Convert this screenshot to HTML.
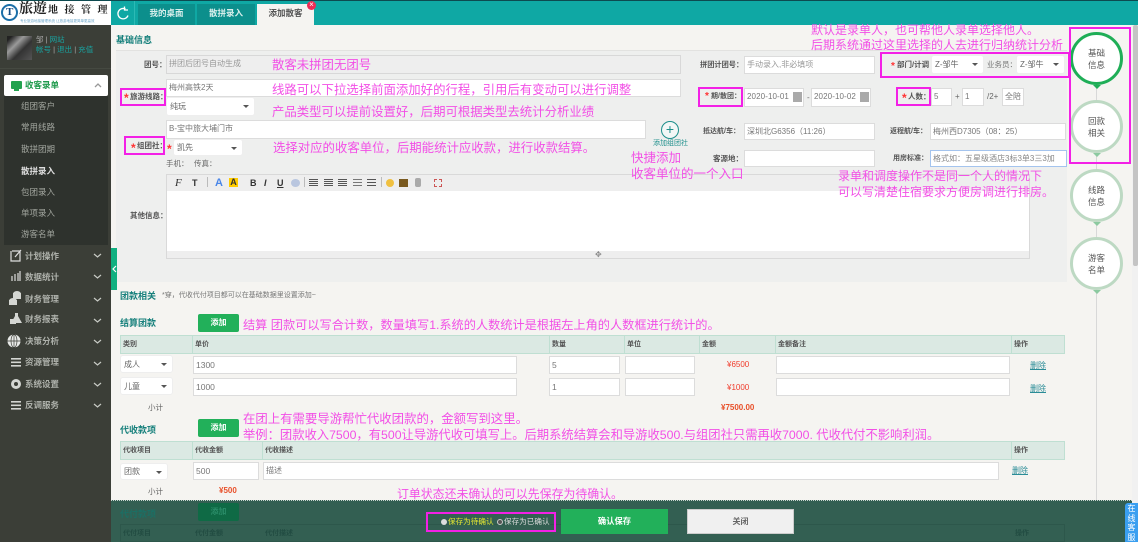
<!DOCTYPE html>
<html lang="zh"><head><meta charset="utf-8"><title>添加散客</title>
<style>
html,body{margin:0;padding:0;width:1138px;height:542px;overflow:hidden;background:#f5f4f1}
#p{position:relative;width:1138px;height:542px;overflow:hidden;font:8px "Liberation Sans","Noto Sans CJK SC",sans-serif;color:#666;filter:blur(.35px)}
#p div,#p span.a{position:absolute;white-space:nowrap;box-sizing:border-box}
.t{line-height:12px}
.l{line-height:12px;font-size:7.5px;color:#555;font-weight:bold}
.n{color:#f24fe6;font-size:12.4px;line-height:16px}
.h{color:#17807c;font-weight:bold;font-size:9px;line-height:14px}
.i{background:#fff;border:1px solid #dcdcdc;line-height:16px;padding-left:2px;color:#777;font-size:8px}
.s{background:#fff;border-radius:3px;border:1px solid #eee;line-height:17px;padding-left:3px;color:#666;font-size:8px}
.s:after{content:"";position:absolute;right:5px;top:7px;border:3px solid transparent;border-top:3px solid #555;border-bottom:0}
.m{border:2px solid #f320e6}
.r{color:#f33;font-size:12px;font-weight:bold}
.th{background:#dbe9e3;border:1px solid #bfdfd2;border-left:0;line-height:17px;padding-left:2px;color:#555;font-size:7px;font-weight:bold}
.mi{color:#aeb1ab;font-size:8.5px;line-height:12px;left:25px;font-weight:bold}
.sm{color:#a0a49d;font-size:8.5px;line-height:12px;left:21px}
.c{background:#fff;border-radius:50%;width:53px;height:53px;left:1070px;border:3px solid #bdd9c3;text-align:center;font-size:8.5px;color:#555;line-height:11.5px;padding-top:13px;white-space:normal!important}
.tri{left:1093px;border:4px solid transparent;border-top:4px solid #8cc9a0;border-bottom:0;width:0;height:0}
.btn{background:#22b05a;color:#fff;text-align:center;border-radius:2px;left:198px;width:41px;height:18px;line-height:18px;font-weight:bold;font-size:8px}
.tab{top:4px;height:21px;background:#0c8f8c;color:#d8efec;text-align:center;line-height:19px;font-weight:bold;font-size:8.5px}
.dl{color:#2a8c97;text-decoration:underline;line-height:12px}
</style></head><body><div id="p">

<!-- top bar -->
<div style="left:111px;top:0;width:1027px;height:25px;background:#0fa8a4;border-top:1px solid #0d4a50"></div>
<div style="left:134px;top:1px;width:1px;height:24px;background:#2dbab5"></div>
<div style="left:0;top:0;width:111px;height:25px;background:#fff;overflow:hidden;border-top:1px solid #0d4a50">
 <div style="left:1px;top:3px;width:17px;height:17px;border-radius:50%;border:2.500px solid #1b6fa8;background:#fff"></div>
 <div style="left:6px;top:5px;color:#174e84;font:bold 11px 'Liberation Serif',serif;line-height:12px">T</div>
 <div style="left:19px;top:-1px;color:#222;font:bold 14px 'Liberation Serif','Noto Serif CJK SC',serif;line-height:20px">旅遊</div>
 <div style="left:48px;top:1px;color:#222;font:bold 10px 'Liberation Serif','Noto Serif CJK SC',serif;line-height:18px;letter-spacing:6.500px">地接管理平台</div>
 <div style="left:20px;top:18px;color:#6aa5c9;font-size:3.500px;line-height:5px">专业旅游地接管理系统 让旅游地接更简单更高效</div>
</div>
<div style="left:116px;top:6px;width:14px;height:14px"><svg width="14" height="14" viewBox="0 0 14 14"><path d="M12 9.500A5.200 5.200 0 1 1 9.500 3M8.500 .5v3.500h3.500" fill="none" stroke="#fff" stroke-width="1.300"/></svg></div>
<div class="tab" style="left:138px;width:57px">我的桌面</div>
<div class="tab" style="left:197px;width:58px">散拼录入</div>
<div class="tab" style="left:257px;width:57px;height:22px;background:#f5f4f1;color:#555">添加散客</div>
<div style="left:307px;top:1px;width:9px;height:9px;border-radius:50%;background:#ee2b55;color:#fff;font-size:8px;line-height:8px;text-align:center">×</div>

<!-- sidebar -->
<div style="left:0;top:25px;width:111px;height:517px;background:#3b3e37"></div>
<div style="left:7px;top:36px;width:25px;height:24px;background:linear-gradient(135deg,#222 10%,#9a9a9a 35%,#333 60%,#555 100%)"></div>
<div class="t" style="left:36px;top:34px;color:#aaa;font-size:7.500px">邹 | <span style="color:#19a3a0">网站</span></div>
<div class="t" style="left:36px;top:44px;color:#19a3a0;font-size:7.500px">帐号 <span style="color:#aaa">|</span> 退出 <span style="color:#aaa">|</span> 充值</div>
<div style="left:0;top:68px;width:111px;height:1px;background:#454941"></div>
<div style="left:4px;top:75px;width:104px;height:21px;background:#fff;border-radius:2px"></div>
<div style="left:11px;top:81px;width:11px;height:8px;background:#22a24e;border-radius:1px"></div>
<div style="left:14px;top:89px;width:5px;height:2px;background:#22a24e"></div>
<div style="left:25px;top:79px;color:#1e9a4c;font-weight:bold;font-size:8.500px;line-height:12px">收客录单</div>
<div style="left:94px;top:83px"><svg width="8" height="5" style="display:block"><path d="M1 4l3-3 3 3" fill="none" stroke="#999" stroke-width="1.300"/></svg></div>
<div style="left:4px;top:96px;width:104px;height:149px;background:#2e322d"></div>
<div class="sm" style="top:100px">组团客户</div>
<div class="sm" style="top:121px">常用线路</div>
<div class="sm" style="top:143px">散拼团期</div>
<div class="sm" style="top:165px;color:#ddd;font-weight:bold">散拼录入</div>
<div class="sm" style="top:186px">包团录入</div>
<div class="sm" style="top:207px">单项录入</div>
<div class="sm" style="top:228px">游客名单</div>

<div class="mi" style="top:250px">计划操作</div>
<div class="mi" style="top:271px">数据统计</div>
<div class="mi" style="top:293px">财务管理</div>
<div class="mi" style="top:313px">财务报表</div>
<div class="mi" style="top:335px">决策分析</div>
<div class="mi" style="top:356px">资源管理</div>
<div class="mi" style="top:378px">系统设置</div>
<div class="mi" style="top:399px">反调服务</div>
<div style="left:0;top:245px;width:111px;height:180px"><svg width="111" height="180" style="display:block">
 <g fill="none" stroke="#c8cbc5" stroke-width="1.200">
 <path d="M94 9l3.500 3 3.500-3M94 30l3.500 3 3.500-3M94 53l3.500 3 3.500-3M94 74l3.500 3 3.500-3M94 95l3.500 3 3.500-3M94 117l3.500 3 3.500-3M94 138l3.500 3 3.500-3M94 159l3.500 3 3.500-3"/>
 <path d="M12 6h8v10h-9v-10M15 12l6-7" stroke="#ddd"/>
 <path d="M12 36v-5M15 36v-7M18 36v-8M20 36v-10" stroke="#ddd"/>
 </g>
 <g fill="#d4d6d2">
 <ellipse cx="17" cy="49" rx="4" ry="3"/><ellipse cx="13" cy="56" rx="4" ry="3"/><rect x="9" y="55" width="8" height="5"/><rect x="13" y="48" width="8" height="6"/>
 <path d="M15 68h3v3l4 7H11l4-7z"/><rect x="10" y="74" width="6" height="5"/>
 <circle cx="14" cy="96" r="6.500" fill="#e8e9e7"/>
 <rect x="11" y="113" width="10" height="1.600"/><rect x="11" y="116.500" width="10" height="1.600"/><rect x="11" y="120" width="10" height="1.600"/>
 <rect x="11" y="156" width="10" height="1.600"/><rect x="11" y="159.500" width="10" height="1.600"/><rect x="11" y="163" width="10" height="1.600"/>
 <circle cx="16" cy="139" r="5"/>
 </g>
 <g stroke="#3b3e37" stroke-width=".7" fill="none"><path d="M7.500 96h13M14 89.500v13"/><ellipse cx="14" cy="96" rx="3" ry="6.500"/></g>
 <circle cx="16" cy="139" r="2" fill="#3b3e37"/>
</svg></div>

<!-- form panel -->
<div style="left:111px;top:25px;width:1021px;height:475px;background:#f5f4f1"></div>
<div class="h" style="left:116px;top:33px">基础信息</div>
<div style="left:116px;top:50px;width:951px;height:232px;background:#eeefee;border-top:1px solid #e2e2e0"></div>
<div style="left:111px;top:248px;width:6px;height:42px;background:#10b080"></div>
<div style="left:112px;top:265px"><svg width="5" height="8" style="display:block"><path d="M4 1L1 4l3 3" fill="none" stroke="#fff" stroke-width="1.200"/></svg></div>

<div class="l" style="left:144px;top:59px">团号：</div>
<div class="i" style="left:166px;top:55px;width:515px;height:19px;background:#eee;color:#999;border:1px solid #d8d8d8">拼团后团号自动生成</div>
<div class="i" style="left:166px;top:79px;width:515px;height:18px">梅州高铁2天</div>
<div class="s" style="left:166px;top:97px;width:89px;height:19px">纯玩</div>
<div class="m" style="left:120px;top:88px;width:46px;height:18px"></div>
<div class="l" style="left:130px;top:91px">旅游线路：</div>
<div class="r" style="left:124px;top:92px;line-height:12px">*</div>
<div class="i" style="left:166px;top:120px;width:480px;height:19px">B-宝中旅大埔门市</div>
<div class="s" style="left:173px;top:139px;width:70px;height:17px;line-height:15px">凯先</div>
<div class="r" style="left:167px;top:143px;line-height:12px">*</div>
<div class="m" style="left:124px;top:136px;width:41px;height:19px"></div>
<div class="l" style="left:137px;top:140px">组团社：</div>
<div class="r" style="left:131px;top:142px;line-height:12px">*</div>
<div class="t" style="left:166px;top:158px;font-size:7.500px">手机：</div>
<div class="t" style="left:194px;top:158px;font-size:7.500px">传真：</div>

<!-- editor -->
<div style="left:166px;top:174px;width:864px;height:85px;background:#eee;border:1px solid #d9d9d9"></div>
<div style="left:167px;top:191px;width:862px;height:60px;background:#fff"></div>
<div class="l" style="left:130px;top:210px">其他信息：</div>
<div style="left:172px;top:177px;width:270px;height:12px;font-size:9px;line-height:12px;color:#333">
 <span class="a" style="left:3px;font-style:italic;font-family:'Liberation Serif',serif;font-size:11px">F</span>
 <span class="a" style="left:20px;font-weight:bold">T</span>
 <span class="a" style="left:35px;width:1px;height:10px;background:#bbb"></span>
 <span class="a" style="left:43px;color:#4a86e8;font-size:11px;font-weight:bold">A</span>
 <span class="a" style="left:57px;width:9px;height:9px;background:#fc0;text-align:center;font-weight:bold;line-height:9px;top:1px">A</span>
 <span class="a" style="left:78px;font-weight:bold">B</span>
 <span class="a" style="left:92px;font-weight:bold;font-style:italic">I</span>
 <span class="a" style="left:105px;font-weight:bold;text-decoration:underline">U</span>
 <span class="a" style="left:119px;width:9px;height:8px;top:2px;border-radius:50%;background:#b9c6df"></span>
 <span class="a" style="left:132px;width:1px;height:10px;background:#bbb"></span>
 <span class="a" style="left:137px;top:2px;width:9px;height:8px;background:repeating-linear-gradient(#555 0 1px,#eee 1px 2px)"></span>
 <span class="a" style="left:152px;top:2px;width:9px;height:8px;background:repeating-linear-gradient(#555 0 1px,#eee 1px 2px)"></span>
 <span class="a" style="left:166px;top:2px;width:9px;height:8px;background:repeating-linear-gradient(#555 0 1px,#eee 1px 2px)"></span>
 <span class="a" style="left:181px;top:2px;width:9px;height:8px;background:repeating-linear-gradient(#777 0 1px,#eee 1px 3px)"></span>
 <span class="a" style="left:195px;top:2px;width:9px;height:8px;background:repeating-linear-gradient(#555 0 1px,#eee 1px 3px)"></span>
 <span class="a" style="left:209px;width:1px;height:10px;background:#bbb"></span>
 <span class="a" style="left:214px;top:2px;width:8px;height:8px;border-radius:50%;background:#f0c040"></span>
 <span class="a" style="left:227px;top:2px;width:9px;height:8px;background:#7a5a20"></span>
 <span class="a" style="left:243px;top:1px;width:6px;height:9px;background:#aaa;border-radius:2px"></span>
 <span class="a" style="left:262px;top:2px;width:8px;height:8px;border:1px dashed #c55"></span>
</div>
<div class="t" style="left:595px;top:249px;color:#888;font-size:8px">✥</div>

<!-- add icon -->
<div style="left:661px;top:121px;width:18px;height:18px;border:1px solid #1d8f8b;border-radius:50%;color:#1d8f8b;text-align:center;font-size:14px;line-height:15px;background:#f2f7f6">+</div>
<div class="t" style="left:653px;top:138px;color:#1d8f8b;font-size:7px">添加组团社</div>

<!-- right form -->
<div class="l" style="left:700px;top:59px;font-size:7.200px">拼团计团号：</div>
<div class="i" style="left:744px;top:56px;width:131px;height:18px;color:#999">手动录入,非必填项</div>
<div class="m" style="left:698px;top:87px;width:45px;height:20px"></div>
<div class="l" style="left:711px;top:91px;font-size:7px">期/散团：</div>
<div class="r" style="left:705px;top:91px;line-height:12px;font-size:10px">*</div>
<div class="i" style="left:744px;top:88px;width:60px;height:19px;letter-spacing:.1px">2020-10-01</div>
<div style="left:793px;top:92px;width:9px;height:10px;background:#aaa"></div>
<div class="t" style="left:807px;top:92px">-</div>
<div class="i" style="left:811px;top:88px;width:60px;height:19px;letter-spacing:.1px">2020-10-02</div>
<div style="left:860px;top:92px;width:9px;height:10px;background:#aaa"></div>
<div class="l" style="left:703px;top:126px;font-size:7px">抵达航/车：</div>
<div class="i" style="left:744px;top:123px;width:131px;height:17px;line-height:15px">深圳北G6356（11:26）</div>
<div class="l" style="left:713px;top:153px">客源地：</div>
<div class="i" style="left:744px;top:150px;width:131px;height:17px"></div>
<div class="l" style="left:890px;top:126px;font-size:7px">返程航/车：</div>
<div class="i" style="left:930px;top:123px;width:136px;height:17px;line-height:15px">梅州西D7305（08：25）</div>
<div class="l" style="left:893px;top:153px;font-size:7px">用房标准：</div>
<div class="i" style="left:930px;top:150px;width:137px;height:17px;line-height:15px;border-color:#a4c4ee;color:#888">格式如：五星级酒店3标3单3三3加</div>

<div class="m" style="left:880px;top:52px;width:190px;height:26px"></div>
<div class="r" style="left:891px;top:61px;line-height:12px;font-size:10px">*</div>
<div class="l" style="left:897px;top:59px">部门/计调</div>
<div class="s" style="left:931px;top:55px;width:53px;height:19px">Z-邹牛</div>
<div class="t" style="left:987px;top:59px;color:#777;font-size:7.500px">业务员：</div>
<div class="s" style="left:1016px;top:55px;width:49px;height:19px">Z-邹牛</div>

<div class="m" style="left:896px;top:87px;width:35px;height:19px"></div>
<div class="r" style="left:902px;top:92px;line-height:12px">*</div>
<div class="l" style="left:908px;top:91px">人数：</div>
<div class="i" style="left:931px;top:88px;width:21px;height:18px">5</div>
<div class="t" style="left:955px;top:91px">+</div>
<div class="i" style="left:962px;top:88px;width:22px;height:18px">1</div>
<div class="t" style="left:987px;top:91px">/2+</div>
<div class="i" style="left:1002px;top:88px;width:22px;height:18px">全陪</div>

<!-- annotations top -->
<div class="n" style="left:272px;top:57px">散客未拼团无团号</div>
<div class="n" style="left:272px;top:82px">线路可以下拉选择前面添加好的行程，引用后有变动可以进行调整</div>
<div class="n" style="left:272px;top:104px">产品类型可以提前设置好，后期可根据类型去统计分析业绩</div>
<div class="n" style="left:273px;top:140px">选择对应的收客单位，后期能统计应收款，进行收款结算。</div>
<div class="n" style="left:631px;top:150px;font-size:12.500px">快捷添加</div>
<div class="n" style="left:631px;top:166px;font-size:12.500px">收客单位的一个入口</div>
<div class="n" style="left:811px;top:22px;font-size:12px">默认是录单人，也可帮他人录单选择他人。</div>
<div class="n" style="left:811px;top:37px;font-size:12px">后期系统通过这里选择的人去进行归纳统计分析</div>
<div class="n" style="left:838px;top:168px;font-size:12px">录单和调度操作不是同一个人的情况下</div>
<div class="n" style="left:838px;top:184px;font-size:12px">可以写清楚住宿要求方便房调进行排房。</div>

<!-- right steps -->
<div style="left:1096px;top:85px;width:1px;height:415px;background:#d8d8d8"></div>
<div class="c" style="top:32px;border-color:#1fae57">基础<br>信息</div>
<div class="tri" style="top:85px;border-top-color:#1fae57"></div>
<div class="c" style="top:100px">回款<br>相关</div>
<div class="tri" style="top:153px"></div>
<div class="c" style="top:169px">线路<br>信息</div>
<div class="tri" style="top:222px"></div>
<div class="c" style="top:237px">游客<br>名单</div>
<div class="tri" style="top:290px"></div>
<div class="m" style="left:1069px;top:27px;width:62px;height:137px"></div>
<div style="left:1132px;top:25px;width:6px;height:517px;background:#f1f1f1"></div>
<div style="left:1133px;top:25px;width:5px;height:241px;background:#c4c4c4;border-radius:2px"></div>

<!-- 团款相关 -->
<div class="h" style="left:120px;top:289px">团款相关</div>
<div class="t" style="left:162px;top:290px;font-size:7px;color:#777">*穿，代收代付项目都可以在基础数据里设置添加~</div>
<div class="h" style="left:120px;top:316px">结算团款</div>
<div class="btn" style="top:314px">添加</div>
<div class="n" style="left:243px;top:317px;font-size:12.200px">结算 团款可以写合计数，数量填写1.系统的人数统计是根据左上角的人数框进行统计的。</div>

<div class="th" style="left:120px;top:335px;width:73px;height:19px;border-left:1px solid #bfdfd2">类别</div>
<div class="th" style="left:193px;top:335px;width:357px;height:19px">单价</div>
<div class="th" style="left:550px;top:335px;width:75px;height:19px">数量</div>
<div class="th" style="left:625px;top:335px;width:75px;height:19px">单位</div>
<div class="th" style="left:700px;top:335px;width:76px;height:19px">金额</div>
<div class="th" style="left:776px;top:335px;width:236px;height:19px">金额备注</div>
<div class="th" style="left:1012px;top:335px;width:53px;height:19px">操作</div>

<div class="s" style="left:120px;top:355px;width:53px;height:18px">成人</div>
<div class="i" style="left:193px;top:356px;width:324px;height:18px;font-size:8.500px">1300</div>
<div class="i" style="left:549px;top:356px;width:71px;height:18px;font-size:8.500px">5</div>
<div class="i" style="left:625px;top:356px;width:70px;height:18px"></div>
<div class="t" style="left:727px;top:359px;color:#f03c2c">¥6500</div>
<div class="i" style="left:776px;top:356px;width:234px;height:18px"></div>
<div class="dl" style="left:1030px;top:360px">删除</div>

<div class="s" style="left:120px;top:377px;width:53px;height:18px">儿童</div>
<div class="i" style="left:193px;top:378px;width:324px;height:18px;font-size:8.500px">1000</div>
<div class="i" style="left:549px;top:378px;width:71px;height:18px;font-size:8.500px">1</div>
<div class="i" style="left:625px;top:378px;width:70px;height:18px"></div>
<div class="t" style="left:727px;top:382px;color:#f03c2c">¥1000</div>
<div class="i" style="left:776px;top:378px;width:234px;height:18px"></div>
<div class="dl" style="left:1030px;top:383px">删除</div>

<div class="t" style="left:148px;top:402px;font-size:7.500px">小计</div>
<div class="t" style="left:721px;top:402px;color:#e8502a;font-weight:bold;font-size:8px">¥7500.00</div>
<div style="left:700px;top:410px;width:70px;height:6px;background:#f5f4f1"></div>

<div class="h" style="left:120px;top:423px">代收款项</div>
<div class="btn" style="top:419px">添加</div>
<div class="n" style="left:243px;top:411px">在团上有需要导游帮忙代收团款的，金额写到这里。</div>
<div class="n" style="left:243px;top:427px;font-size:12.300px">举例：团款收入7500，有500让导游代收可填写上。后期系统结算会和导游收500.与组团社只需再收7000. 代收代付不影响利润。</div>

<div class="th" style="left:120px;top:441px;width:73px;height:19px;border-left:1px solid #bfdfd2">代收项目</div>
<div class="th" style="left:193px;top:441px;width:70px;height:19px">代收金额</div>
<div class="th" style="left:263px;top:441px;width:749px;height:19px">代收描述</div>
<div class="th" style="left:1012px;top:441px;width:53px;height:19px">操作</div>
<div class="s" style="left:120px;top:463px;width:48px;height:17px;line-height:16px">团款</div>
<div class="i" style="left:193px;top:462px;width:66px;height:18px;font-size:8.500px">500</div>
<div class="i" style="left:263px;top:462px;width:736px;height:18px">描述</div>
<div class="dl" style="left:1012px;top:465px">删除</div>
<div class="t" style="left:148px;top:486px;font-size:7.500px">小计</div>
<div class="t" style="left:219px;top:485px;color:#e8502a;font-weight:bold">¥500</div>
<div class="n" style="left:397px;top:486px;font-size:11.900px">订单状态还未确认的可以先保存为待确认。</div>

<!-- bottom overlay -->
<div style="left:111px;top:500px;width:1021px;height:42px;background:#335f52;border-top:1px dotted #c9d4cf"></div>
<div class="h" style="left:120px;top:507px;color:#1c6f64">代付款项</div>
<div class="btn" style="top:503px;background:#0f6a45;color:#2a8c68">添加</div>
<div style="left:120px;top:524px;width:945px;height:18px;border:1px solid #2d574b"></div>
<div class="t" style="left:123px;top:528px;color:#224c42;font-size:7px;font-weight:bold">代付项目</div>
<div class="t" style="left:195px;top:528px;color:#224c42;font-size:7px;font-weight:bold">代付金额</div>
<div class="t" style="left:265px;top:528px;color:#224c42;font-size:7px;font-weight:bold">代付描述</div>
<div class="t" style="left:1015px;top:528px;color:#224c42;font-size:7px;font-weight:bold">操作</div>
<div class="m" style="left:426px;top:512px;width:130px;height:20px"></div>
<div style="left:441px;top:519px;width:6px;height:6px;border-radius:50%;background:#ddd"></div>
<div class="t" style="left:448px;top:516px;color:#e6e832;font-size:7.600px">保存为待确认</div>
<div style="left:497px;top:519px;width:6px;height:6px;border-radius:50%;background:#555;border:1px solid #ccc"></div>
<div class="t" style="left:504px;top:516px;color:#ddd;font-size:7.600px">保存为已确认</div>
<div style="left:561px;top:509px;width:107px;height:25px;background:#22b05a;color:#fff;text-align:center;line-height:25px;font-weight:bold;font-size:8.300px">确认保存</div>
<div style="left:687px;top:509px;width:107px;height:25px;background:#f0f0f0;border:1px solid #ccc;color:#666;text-align:center;line-height:23px;font-weight:bold">关闭</div>
<div style="left:1125px;top:503px;width:13px;height:39px;background:#3a9ff0;border-radius:3px 0 0 0;color:#fff;font-size:8px;line-height:9.500px;text-align:center;white-space:normal;padding-top:1px">在<br>线<br>客<br>服</div>

</div></body></html>
